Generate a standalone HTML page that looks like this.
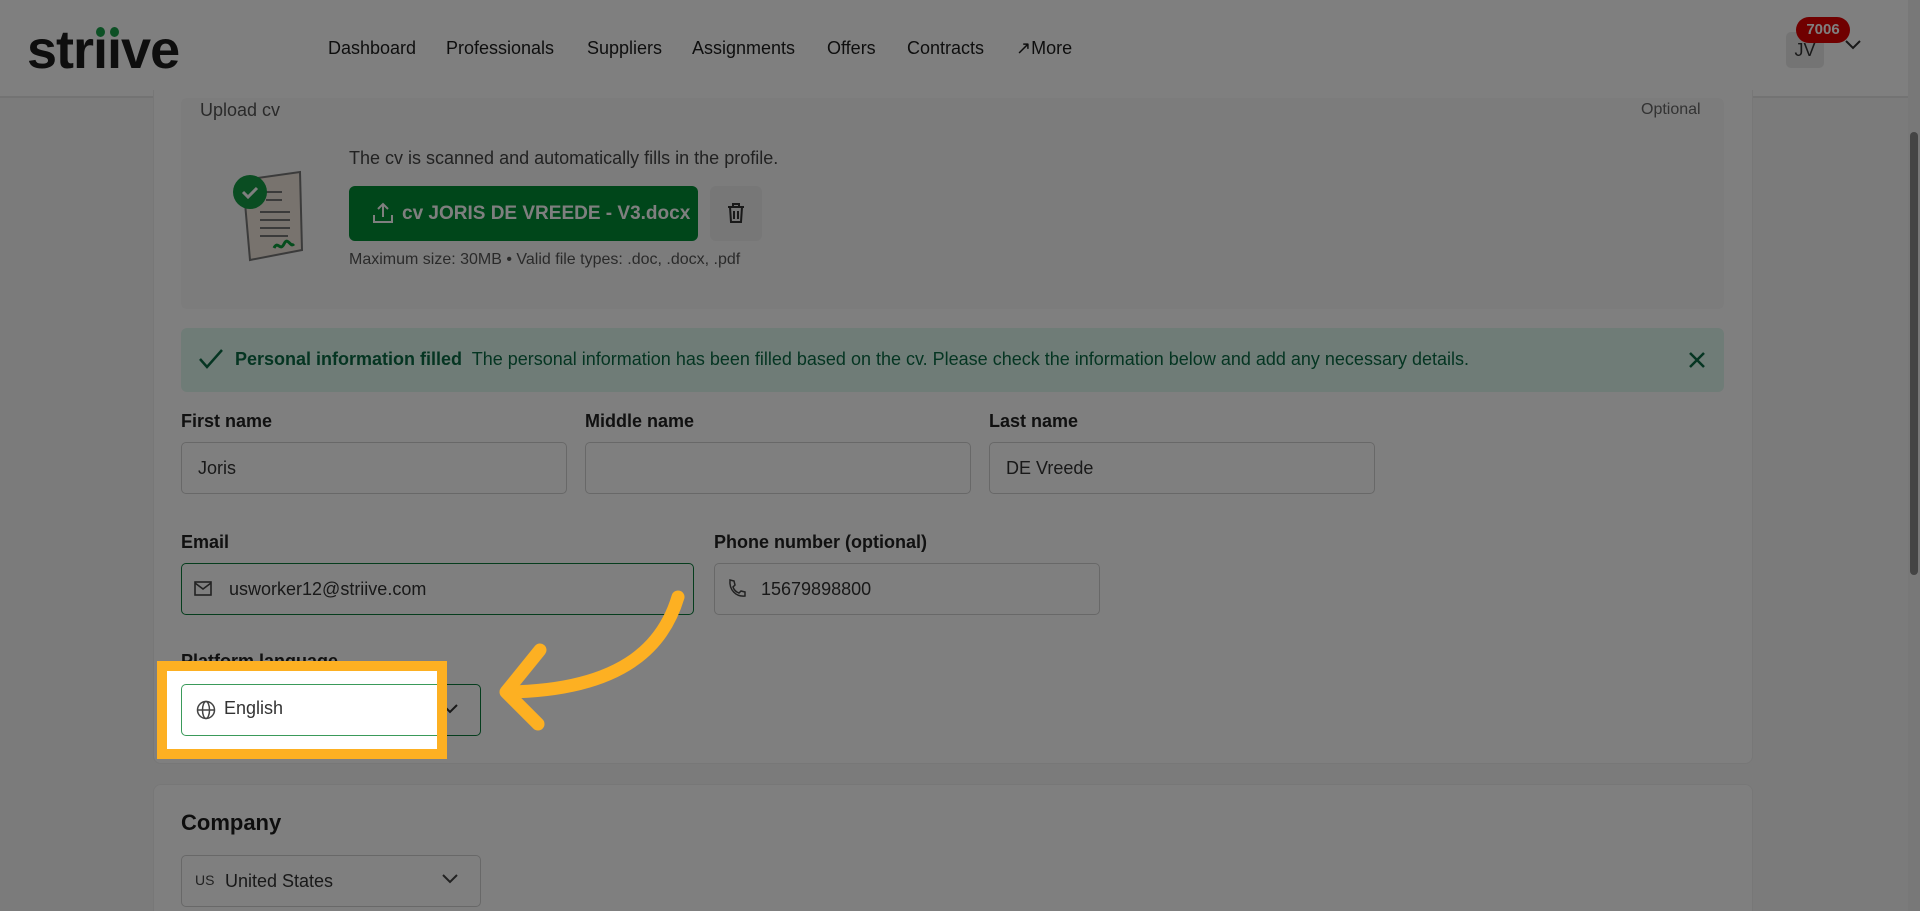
<!DOCTYPE html>
<html><head><meta charset="utf-8"><style>
*{box-sizing:border-box;margin:0;padding:0}
html{overflow:hidden;width:1920px;height:911px}
body{width:1920px;height:911px;overflow:hidden;background:#f6f6f6;font-family:"Liberation Sans",sans-serif;color:#1d1d1d;position:relative}
.abs{position:absolute}
.hdr{left:0;top:0;width:1920px;height:98px;background:#fff;border-bottom:2px solid #e6e6e6}
.nav{top:38px;font-size:18px;color:#1d1d1d}
.card{background:#fff;border:1px solid #eee;border-radius:8px}
.lbl{font-size:18px;font-weight:bold;color:#222}
.inp{height:52px;border:1px solid #d0d0d0;border-radius:5px;background:#fff;font-size:18px;color:#333;padding-left:16px;line-height:50px}
.ov{left:0;top:0;width:1920px;height:911px;background:rgba(0,0,0,.5)}
</style></head><body>
<div class="abs hdr"></div>
<div class="abs" style="left:27px;top:20px;font-size:54px;font-weight:bold;letter-spacing:-1px;line-height:60px">strııve</div>
<div class="abs" style="left:96px;top:27px;width:9px;height:10px;border-radius:50%;background:#1aa04a"></div>
<div class="abs" style="left:110px;top:27px;width:9px;height:10px;border-radius:50%;background:#1aa04a"></div>
<div class="abs nav" style="left:328px">Dashboard</div>
<div class="abs nav" style="left:446px">Professionals</div>
<div class="abs nav" style="left:587px">Suppliers</div>
<div class="abs nav" style="left:692px">Assignments</div>
<div class="abs nav" style="left:827px">Offers</div>
<div class="abs nav" style="left:907px">Contracts</div>
<div class="abs nav" style="left:1016px">↗More</div>
<div class="abs" style="left:1786px;top:32px;width:38px;height:36px;background:#e8e8e8;border-radius:5px;font-size:18px;line-height:36px;text-align:center;color:#333">JV</div>
<div class="abs" style="left:1796px;top:17px;width:54px;height:26px;background:#e00000;border-radius:13px;color:#fff;font-size:15px;font-weight:bold;text-align:center;line-height:26px">7006</div>
<svg class="abs" style="left:1843px;top:38px" width="20" height="14"><path d="M3 3l7 7 7-7" fill="none" stroke="#333" stroke-width="2"/></svg>
<div class="abs" style="left:1908px;top:0;width:12px;height:911px;background:#f0f0f0"></div>
<div class="abs" style="left:1910px;top:132px;width:8px;height:443px;background:#888;border-radius:4px"></div>

<div class="abs card" style="left:153px;top:90px;width:1600px;height:674px;border-top:none;border-radius:0 0 8px 8px"></div>
<div class="abs" style="left:181px;top:98px;width:1543px;height:211px;background:#f8f8f8;border-radius:6px"></div>
<div class="abs" style="left:200px;top:100px;font-size:18px;color:#555">Upload cv</div>
<div class="abs" style="left:1641px;top:101px;font-size:16px;color:#666">Optional</div>
<svg class="abs" style="left:228px;top:166px" width="90" height="100">
<path d="M15 14 L72 6 L74 84 L22 94 Z" fill="#f0e6dc" stroke="#777" stroke-width="2"/>
<g stroke="#777" stroke-width="2" fill="none"><path d="M38 26h16M38 34h16M32 46h30M32 54h30M32 62h30M32 70h28"/></g>
<path d="M46 82c4-8 6 4 10-4s6 4 10 0" stroke="#0a9a3a" stroke-width="3" fill="none"/>
<circle cx="22" cy="26" r="17" fill="#159a44"/><path d="M15 26l5 5 9-9" stroke="#fff" stroke-width="3" fill="none"/></svg>
<div class="abs" style="left:349px;top:148px;font-size:18px;color:#444">The cv is scanned and automatically fills in the profile.</div>
<div class="abs" style="left:349px;top:186px;width:349px;height:55px;background:#008c35;border-radius:6px;color:#fff;font-size:19px;font-weight:bold;line-height:55px;padding-left:53px">cv JORIS DE VREEDE - V3.docx</div>
<svg class="abs" style="left:372px;top:201px" width="22" height="24"><path d="M11 16V3M6 8l5-5 5 5M2 14v7h18v-7" fill="none" stroke="#fff" stroke-width="2"/></svg>
<div class="abs" style="left:710px;top:186px;width:52px;height:55px;background:#eee;border-radius:6px"></div>
<svg class="abs" style="left:725px;top:201px" width="22" height="24"><path d="M3 6h16M8 6V3h6v3M5 6l1 15h10l1-15M9 10v8M13 10v8" fill="none" stroke="#333" stroke-width="2"/></svg>
<div class="abs" style="left:349px;top:251px;font-size:16px;color:#555">Maximum size: 30MB • Valid file types: .doc, .docx, .pdf</div>

<div class="abs" style="left:181px;top:328px;width:1543px;height:64px;background:#dff8ef;border-radius:6px"></div>
<svg class="abs" style="left:198px;top:347px" width="26" height="24"><path d="M2 12l7 8L24 3" fill="none" stroke="#0a6b44" stroke-width="2.5"/></svg>
<div class="abs" style="left:235px;top:349px;font-size:18px;color:#0a6b44"><b>Personal information filled</b>&nbsp; The personal information has been filled based on the cv. Please check the information below and add any necessary details.</div>
<svg class="abs" style="left:1687px;top:350px" width="20" height="20"><path d="M3 3l14 14M17 3L3 17" stroke="#0a6b44" stroke-width="2.5"/></svg>

<div class="abs lbl" style="left:181px;top:411px">First name</div>
<div class="abs lbl" style="left:585px;top:411px">Middle name</div>
<div class="abs lbl" style="left:989px;top:411px">Last name</div>
<div class="abs inp" style="left:181px;top:442px;width:386px">Joris</div>
<div class="abs inp" style="left:585px;top:442px;width:386px"></div>
<div class="abs inp" style="left:989px;top:442px;width:386px">DE Vreede</div>
<div class="abs lbl" style="left:181px;top:532px">Email</div>
<div class="abs lbl" style="left:714px;top:532px">Phone number (optional)</div>
<div class="abs inp" style="left:181px;top:563px;width:513px;border-color:#0a7a3a;padding-left:47px">usworker12@striive.com</div>
<svg class="abs" style="left:193px;top:579px" width="20" height="20"><rect x="2" y="3" width="16" height="13" fill="none" stroke="#444" stroke-width="1.6"/><path d="M2 4l8 6 8-6" fill="none" stroke="#444" stroke-width="1.6"/></svg>
<div class="abs inp" style="left:714px;top:563px;width:386px;padding-left:46px">15679898800</div>
<svg class="abs" style="left:726px;top:578px" width="20" height="20"><path d="M4 2l4 1 1 4-2 2c1 3 3 5 6 6l2-2 4 1 0 4c-9 1-16-6-15-16z" fill="none" stroke="#444" stroke-width="1.5"/></svg>
<div class="abs lbl" style="left:181px;top:651px">Platform language</div>
<div class="abs inp" style="left:181px;top:684px;width:300px;border-color:#0a7a3a"></div>
<svg class="abs" style="left:440px;top:702px" width="20" height="14"><path d="M3 3l7 7 7-7" fill="none" stroke="#333" stroke-width="2"/></svg>

<div class="abs card" style="left:153px;top:784px;width:1600px;height:127px;border-bottom:none;border-radius:8px 8px 0 0"></div>
<div class="abs" style="left:181px;top:810px;font-size:22px;font-weight:bold">Company</div>
<div class="abs inp" style="left:181px;top:855px;width:300px;padding-left:43px">United States</div>
<div class="abs" style="left:195px;top:872px;font-size:14px;color:#444">US</div>
<svg class="abs" style="left:440px;top:872px" width="20" height="14"><path d="M3 3l7 7 7-7" fill="none" stroke="#444" stroke-width="2"/></svg>

<div class="abs ov"></div>
<div class="abs" style="left:157px;top:661px;width:290px;height:98px;border:10px solid #fdb022;background:#fff"></div>
<div class="abs" style="left:181px;top:684px;width:256px;height:52px;border:1px solid #3a9a5a;border-right:none;border-radius:5px 0 0 5px;background:#fff"></div>
<svg class="abs" style="left:195px;top:699px" width="22" height="22"><circle cx="11" cy="11" r="8.5" fill="none" stroke="#444" stroke-width="1.5"/><ellipse cx="11" cy="11" rx="3.5" ry="8.5" fill="none" stroke="#444" stroke-width="1.5"/><path d="M2.5 11h17" stroke="#444" stroke-width="1.5"/></svg>
<div class="abs" style="left:224px;top:698px;font-size:18px;color:#333">English</div>
<svg class="abs" style="left:0;top:0" width="1920" height="911"><path d="M678 597 C665 640 630 690 508 692" fill="none" stroke="#fdb022" stroke-width="13" stroke-linecap="round"/><path d="M540 650 L506 692 L538 724" fill="none" stroke="#fdb022" stroke-width="13" stroke-linecap="round" stroke-linejoin="round"/></svg>
</body></html>
